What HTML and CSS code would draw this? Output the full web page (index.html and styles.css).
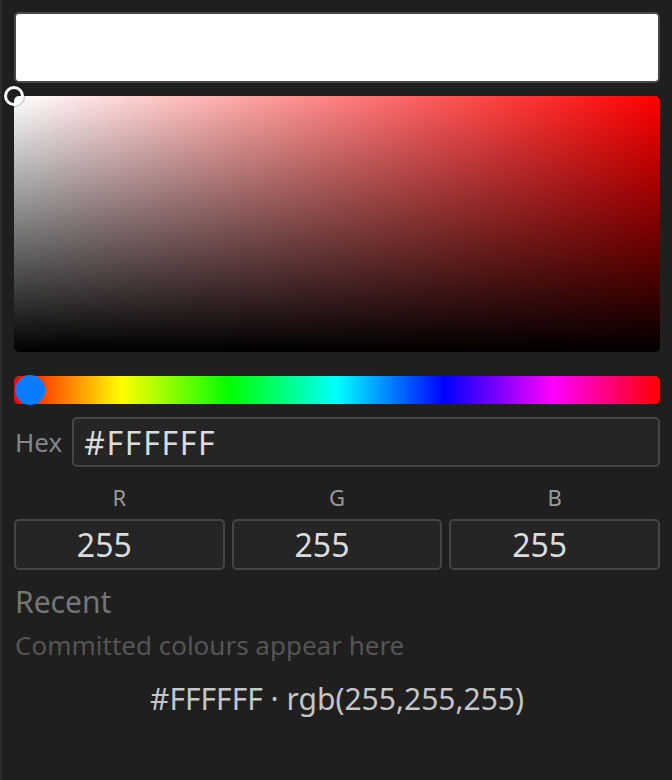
FILE: index.html
```html
<!DOCTYPE html>
<html lang="en">
<head>
<meta charset="utf-8">
<title>Colour picker</title>
<link rel="stylesheet" href="styles.css">
</head>
<body>
<div class="picker">
  <div class="preview"></div>

  <div class="sv-area">
    <span class="sv-knob"></span>
  </div>

  <div class="hue-bar">
    <span class="hue-thumb"></span>
  </div>

  <div class="hex-row">
    <label class="hex-label" for="hex">Hex</label>
    <input class="hex-input" id="hex" type="text" value="#FFFFFF">
  </div>

  <div class="rgb-grid">
    <div class="channel">
      <span class="channel-label">R</span>
      <input class="channel-input" type="text" value="255">
    </div>
    <div class="channel">
      <span class="channel-label">G</span>
      <input class="channel-input" type="text" value="255">
    </div>
    <div class="channel">
      <span class="channel-label">B</span>
      <input class="channel-input" type="text" value="255">
    </div>
  </div>

  <h2 class="recent-title">Recent</h2>
  <p class="recent-empty">Committed colours appear here</p>

  <p class="summary">#FFFFFF · rgb(255,255,255)</p>
</div>
</body>
</html>
```

FILE: styles.css
```css
html, body {
  margin: 0;
  padding: 0;
  height: 100%;
}

body {
  background: #1f1f1f;
  border-left: 2px solid #2c2c2c;
  box-sizing: border-box;
  font-family: "Noto Sans", "Open Sans", sans-serif;
}

.picker {
  display: flex;
  flex-direction: column;
  padding: 12px 12px 0 12px;
}

.preview {
  height: 71px;
  box-sizing: border-box;
  background: #ffffff;
  border: 2px solid #484848;
  border-radius: 5px;
}

.sv-area {
  position: relative;
  margin-top: 13px;
  height: 256px;
  border-radius: 5px;
  background:
    linear-gradient(to top, #000000, rgba(0, 0, 0, 0)),
    linear-gradient(to right, #ffffff, #ff0000);
}

.sv-knob {
  position: absolute;
  left: -10px;
  top: -10px;
  width: 20px;
  height: 20px;
  box-sizing: border-box;
  border: 3px solid #ffffff;
  border-radius: 50%;
  box-shadow: 0 0 2px rgba(0, 0, 0, 0.8);
}

.hue-bar {
  position: relative;
  margin-top: 24px;
  height: 28px;
  border-radius: 5px;
  background: linear-gradient(to right,
    #ff0000 0%, #ffff00 16.67%, #00ff00 33.33%, #00ffff 50%,
    #0000ff 66.67%, #ff00ff 83.33%, #ff0000 100%);
}

.hue-thumb {
  position: absolute;
  left: 1px;
  top: -1px;
  width: 30px;
  height: 30px;
  border-radius: 50%;
  background: #0a7cff;
}

.hex-row {
  display: flex;
  align-items: center;
  gap: 10px;
  margin-top: 13px;
}

.hex-label {
  font-size: 26px;
  color: #858585;
  padding-left: 1px;
}

.hex-input {
  flex: 1;
  min-width: 0;
  height: 50px;
  box-sizing: border-box;
  padding: 0 10px;
  background: #252525;
  border: 2px solid #454545;
  border-radius: 5px;
  color: #dcdcdc;
  font-family: inherit;
  font-size: 32px;
  letter-spacing: 1.7px;
  outline: none;
}

.rgb-grid {
  display: grid;
  grid-template-columns: repeat(3, 1fr);
  gap: 7px;
  margin-top: 15px;
}

.channel {
  display: flex;
  flex-direction: column;
  align-items: stretch;
  gap: 7px;
}

.channel-label {
  text-align: center;
  font-size: 22px;
  line-height: 30px;
  color: #999999;
}

.channel-input {
  width: 100%;
  height: 51px;
  box-sizing: border-box;
  padding: 0 30px 0 0;
  text-align: center;
  background: #252525;
  border: 2px solid #454545;
  border-radius: 5px;
  color: #dcdcdc;
  font-family: inherit;
  font-size: 32px;
  outline: none;
}

.recent-title {
  margin: 12px 0 0 1px;
  font-size: 30px;
  line-height: 40px;
  font-weight: normal;
  color: #767676;
}

.recent-empty {
  margin: 6px 0 0 1px;
  font-size: 26px;
  line-height: 34px;
  color: #555555;
}

.summary {
  margin: 17px 0 0;
  text-align: center;
  font-size: 30px;
  line-height: 40px;
  color: #c6c6c6;
}
```
